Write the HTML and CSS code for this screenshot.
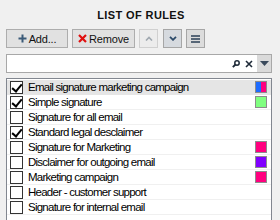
FILE: index.html
```html
<!DOCTYPE html>
<html>
<head>
<meta charset="utf-8">
<link rel="stylesheet" href="styles.css">
</head>
<body>
<div class="panel">
  <div class="title">LIST OF RULES</div>
  <div class="toolbar">
    <button class="btn btn-add"><svg class="ico" width="9" height="9" viewBox="0 0 9 9"><path d="M4.5 0.5v8M0.5 4.5h8" stroke="#3b5a78" stroke-width="2"/></svg>Add...</button>
    <button class="btn btn-remove"><svg class="ico" width="9" height="9" viewBox="0 0 9 9"><path d="M1 1l7 7M8 1l-7 7" stroke="#e01010" stroke-width="2.2"/></svg>Remove</button>
    <button class="btn btn-sq btn-up"><svg width="8" height="5" viewBox="0 0 8 5"><path d="M1 4.5L4 1.5L7 4.5" fill="none" stroke="#a0a8b0" stroke-width="1.6"/></svg></button>
    <button class="btn btn-sq btn-down"><svg width="8" height="5" viewBox="0 0 8 5"><path d="M1 0.8L4 3.8L7 0.8" fill="none" stroke="#2b4a6a" stroke-width="1.8"/></svg></button>
    <button class="btn btn-sq btn-menu"><svg width="9" height="8" viewBox="0 0 9 8"><path d="M0 1h9M0 4h9M0 7h9" stroke="#2b3f55" stroke-width="1.6"/></svg></button>
  </div>
  <div class="search">
    <div class="search-field"></div>
    <svg class="s-ico" width="8" height="8" viewBox="0 0 8 8"><circle cx="5" cy="3" r="2.2" fill="none" stroke="#1e2a38" stroke-width="1.5"/><path d="M3.5 4.5L0.8 7.2" stroke="#1e2a38" stroke-width="1.8"/></svg>
    <svg class="s-ico x-ico" width="8" height="8" viewBox="0 0 8 8"><path d="M1 1l6 6M7 1l-6 6" stroke="#1e2a38" stroke-width="1.6"/></svg>
    <div class="s-drop"><svg width="9" height="5" viewBox="0 0 9 5"><path d="M0 0h9L4.5 5z" fill="#3a4a5c"/></svg></div>
  </div>
  <div class="list">
    <div class="row selected"><span class="cb checked"></span><span class="label">Email signature marketing campaign</span><span class="sw split"><i class="blue"></i><i class="pink"></i></span></div>
    <div class="row"><span class="cb checked"></span><span class="label">Simple signature</span><span class="sw green"></span></div>
    <div class="row"><span class="cb"></span><span class="label">Signature for all email</span></div>
    <div class="row"><span class="cb checked"></span><span class="label">Standard legal desclaimer</span></div>
    <div class="row"><span class="cb"></span><span class="label">Signature for Marketing</span><span class="sw pink"></span></div>
    <div class="row"><span class="cb"></span><span class="label">Disclaimer for outgoing email</span><span class="sw purple"></span></div>
    <div class="row"><span class="cb"></span><span class="label">Marketing campaign</span><span class="sw pink"></span></div>
    <div class="row"><span class="cb"></span><span class="label">Header - customer support</span></div>
    <div class="row"><span class="cb"></span><span class="label">Signature for internal email</span></div>
  </div>
</div>
</body>
</html>
```
FILE: styles.css
```css
* { box-sizing: border-box; }
html, body { margin: 0; padding: 0; }
body {
  background: #f0f0f0;
  width: 280px;
  height: 220px;
  overflow: hidden;
  font-family: "Liberation Sans", Arial, sans-serif;
  color: #000;
}
.panel { padding: 0 8px 0 6px; }
.title {
  height: 29px;
  display: flex;
  align-items: center;
  justify-content: center;
  font-weight: bold;
  font-size: 11px;
  letter-spacing: 0.4px;
  color: #111;
  padding-left: 4px;
}
.toolbar {
  display: flex;
  align-items: center;
  height: 19px;
}
.btn {
  height: 19px;
  margin: 0;
  padding: 0;
  border: 1px solid #adadad;
  background: #e1e1e1;
  font-family: "Liberation Sans", Arial, sans-serif;
  font-size: 11px;
  letter-spacing: -0.2px;
  color: #111;
  display: flex;
  align-items: center;
  justify-content: center;
  gap: 2px;
}
.btn-add { width: 62px; margin-right: 4px; }
.btn-remove { width: 63px; margin-right: 4px; }
.ico { display: block; }
.btn-sq { width: 19px; }
.btn-up { background: #ececec; border-color: #d0d0d0; margin-right: 5px; }
.btn-down { background: #d6dadf; border-color: #a6a6a6; margin-right: 4px; }
.btn-menu { background: #dcdcdc; border-color: #a6a6a6; }
.search {
  margin-top: 6px;
  height: 19px;
  width: 266px;
  border: 1px solid #a8a8a8;
  background: #fff;
  display: flex;
  align-items: center;
}
.search-field { flex: 1; }
.s-ico { display: block; margin-right: 5px; }
.x-ico { margin-right: 4px; }
.s-drop {
  width: 14px;
  height: 17px;
  background: #dadada;
  display: flex;
  align-items: center;
  justify-content: center;
}
.list {
  margin-top: 5px;
  width: 266px;
  height: 150px;
  border: 1px solid #828790;
  border-bottom: none;
  background: #fff;
  padding-top: 1px;
}
.row {
  height: 15px;
  display: flex;
  align-items: center;
  padding-left: 3px;
  border-bottom: 1px solid #f0f0f0;
  font-size: 11.5px;
}
.row.selected { background: #e5e5e5; border-bottom-color: #e5e5e5; }
.cb {
  width: 13px;
  height: 13px;
  border: 1px solid #333;
  background: #fff;
  margin-right: 5px;
  position: relative;
  flex: none;
}
.cb.checked::after {
  content: "";
  position: absolute;
  left: 3px;
  top: 0px;
  width: 4px;
  height: 8px;
  border: solid #000;
  border-width: 0 2px 2px 0;
  transform: rotate(40deg);
}
.label { flex: 1; white-space: nowrap; letter-spacing: -0.75px; }
.sw {
  width: 12px;
  height: 12px;
  border: 1px solid #8c8c8c;
  margin-right: 4px;
  flex: none;
  display: flex;
}
.sw i { flex: 1; }
.blue { background: #1d6cff; }
.pink { background: #ff007f; }
.green { background: #80ff80; }
.purple { background: #8000ff; }
```
